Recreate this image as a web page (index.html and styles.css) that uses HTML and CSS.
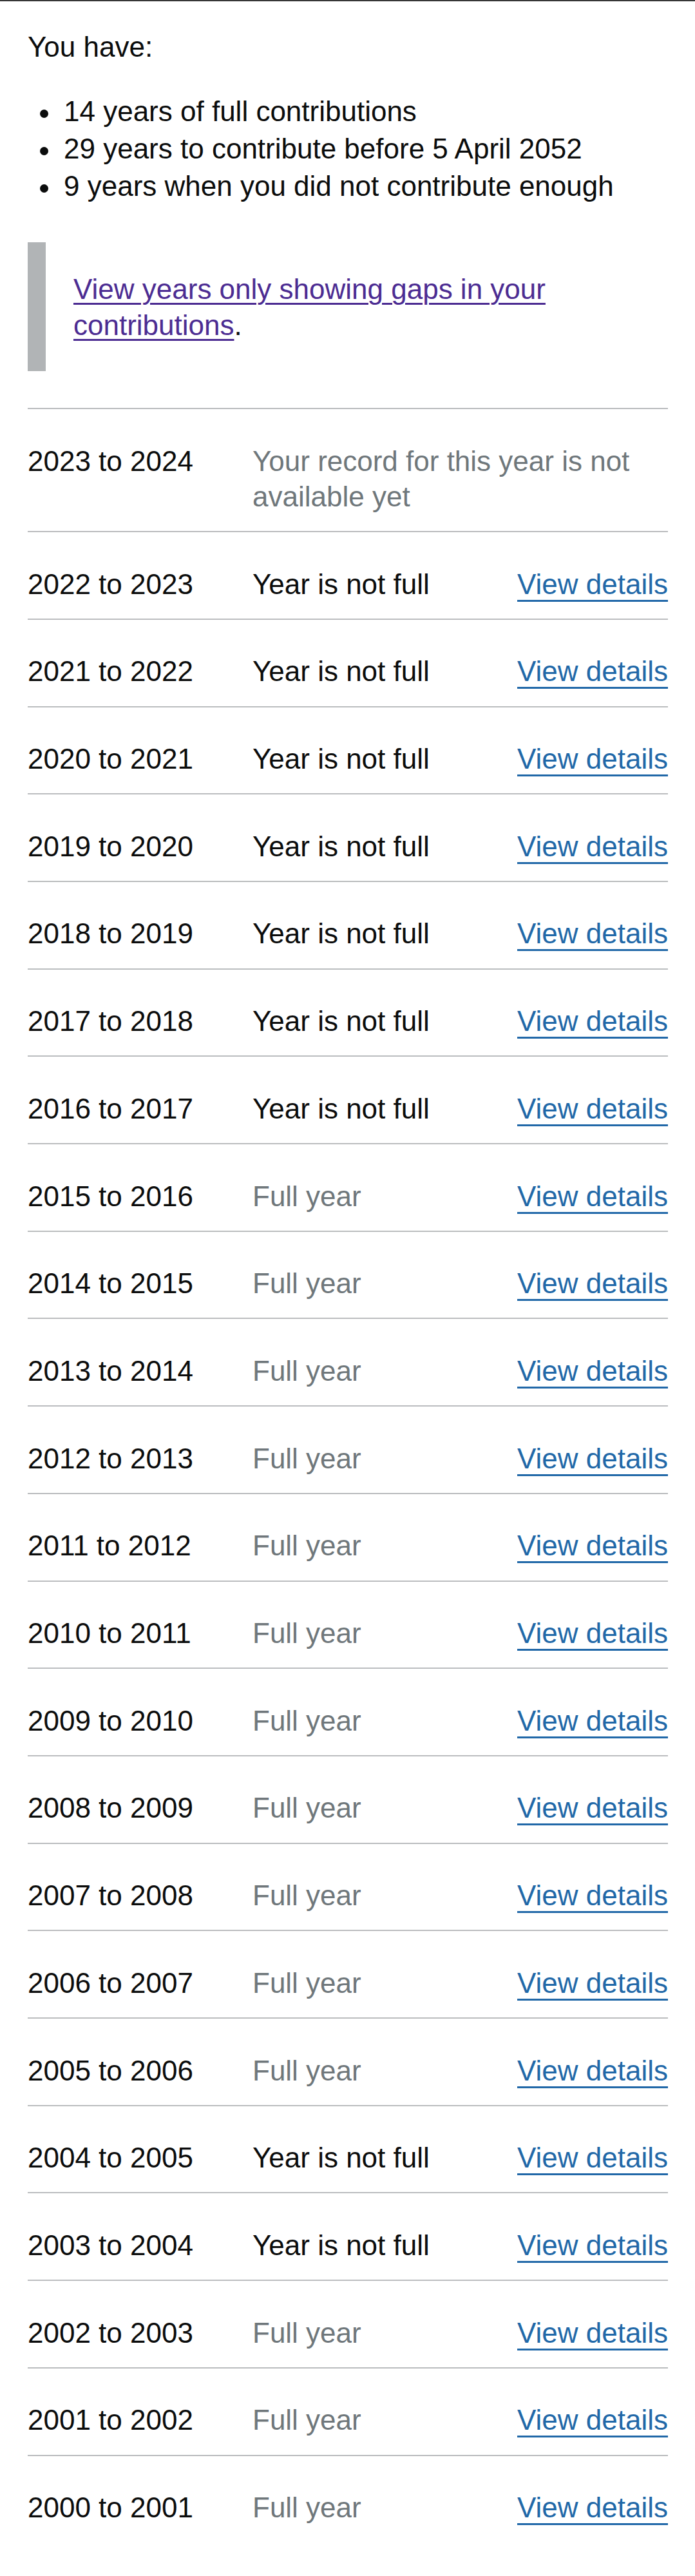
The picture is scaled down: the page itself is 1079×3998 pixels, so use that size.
FILE: index.html
```html
<!DOCTYPE html>
<html lang="en">
<head>
<meta charset="utf-8">
<title>Your National Insurance record</title>
<link rel="stylesheet" href="styles.css">
</head>
<body>
<main class="page">
  <p class="lead">You have:</p>
  <ul class="facts">
    <li>14 years of full contributions</li>
    <li>29 years to contribute before 5 April 2052</li>
    <li>9 years when you did not contribute enough</li>
  </ul>
  <div class="inset">
    <a class="gaps-link" href="#gaps"><span class="gaps-text">View years only showing gaps in your</span> <span class="gaps-text">contributions</span><span class="stop">.</span></a>
  </div>
  <div class="records">
    <div class="row"><div class="key">2023 to 2024</div><div class="value muted">Your record for this year is not available yet</div></div>
    <div class="row"><div class="key">2022 to 2023</div><div class="value">Year is not full</div><div class="action"><a href="#y2022">View details</a></div></div>
    <div class="row"><div class="key">2021 to 2022</div><div class="value">Year is not full</div><div class="action"><a href="#y2021">View details</a></div></div>
    <div class="row"><div class="key">2020 to 2021</div><div class="value">Year is not full</div><div class="action"><a href="#y2020">View details</a></div></div>
    <div class="row"><div class="key">2019 to 2020</div><div class="value">Year is not full</div><div class="action"><a href="#y2019">View details</a></div></div>
    <div class="row"><div class="key">2018 to 2019</div><div class="value">Year is not full</div><div class="action"><a href="#y2018">View details</a></div></div>
    <div class="row"><div class="key">2017 to 2018</div><div class="value">Year is not full</div><div class="action"><a href="#y2017">View details</a></div></div>
    <div class="row"><div class="key">2016 to 2017</div><div class="value">Year is not full</div><div class="action"><a href="#y2016">View details</a></div></div>
    <div class="row"><div class="key">2015 to 2016</div><div class="value muted">Full year</div><div class="action"><a href="#y2015">View details</a></div></div>
    <div class="row"><div class="key">2014 to 2015</div><div class="value muted">Full year</div><div class="action"><a href="#y2014">View details</a></div></div>
    <div class="row"><div class="key">2013 to 2014</div><div class="value muted">Full year</div><div class="action"><a href="#y2013">View details</a></div></div>
    <div class="row"><div class="key">2012 to 2013</div><div class="value muted">Full year</div><div class="action"><a href="#y2012">View details</a></div></div>
    <div class="row"><div class="key">2011 to 2012</div><div class="value muted">Full year</div><div class="action"><a href="#y2011">View details</a></div></div>
    <div class="row"><div class="key">2010 to 2011</div><div class="value muted">Full year</div><div class="action"><a href="#y2010">View details</a></div></div>
    <div class="row"><div class="key">2009 to 2010</div><div class="value muted">Full year</div><div class="action"><a href="#y2009">View details</a></div></div>
    <div class="row"><div class="key">2008 to 2009</div><div class="value muted">Full year</div><div class="action"><a href="#y2008">View details</a></div></div>
    <div class="row"><div class="key">2007 to 2008</div><div class="value muted">Full year</div><div class="action"><a href="#y2007">View details</a></div></div>
    <div class="row"><div class="key">2006 to 2007</div><div class="value muted">Full year</div><div class="action"><a href="#y2006">View details</a></div></div>
    <div class="row"><div class="key">2005 to 2006</div><div class="value muted">Full year</div><div class="action"><a href="#y2005">View details</a></div></div>
    <div class="row"><div class="key">2004 to 2005</div><div class="value">Year is not full</div><div class="action"><a href="#y2004">View details</a></div></div>
    <div class="row"><div class="key">2003 to 2004</div><div class="value">Year is not full</div><div class="action"><a href="#y2003">View details</a></div></div>
    <div class="row"><div class="key">2002 to 2003</div><div class="value muted">Full year</div><div class="action"><a href="#y2002">View details</a></div></div>
    <div class="row"><div class="key">2001 to 2002</div><div class="value muted">Full year</div><div class="action"><a href="#y2001">View details</a></div></div>
    <div class="row"><div class="key">2000 to 2001</div><div class="value muted">Full year</div><div class="action"><a href="#y2000">View details</a></div></div>
  </div>
</main>
</body>
</html>
```
FILE: styles.css
```css
html, body {
  margin: 0;
  padding: 0;
  background: #ffffff;
}

body {
  font-family: "Liberation Sans", Arial, sans-serif;
  color: #0b0c0c;
  font-size: 44px;
}

.page {
  border-top: 2px solid #363636;
  padding: 42px 42px 53px 43px;
}

.lead {
  margin: 0 0 42px;
  line-height: 58px;
}

.facts {
  list-style: none;
  margin: 0 0 58px;
  padding: 0 0 0 56px;
  line-height: 58px;
}

.facts li {
  position: relative;
}

.facts li::before {
  content: "";
  position: absolute;
  left: -37.5px;
  top: 26px;
  width: 13px;
  height: 13px;
  border-radius: 50%;
  background: #0b0c0c;
}

.inset {
  border-left: 28px solid #b1b4b6;
  padding: 45px 20px 43px 43px;
  margin: 0 0 57px;
  line-height: 56px;
}

.gaps-link {
  color: #4c2c92;
  text-decoration: none;
}

.gaps-text {
  text-decoration: underline;
  text-decoration-thickness: 2.6px;
  text-underline-offset: 6px;
}

.stop {
  color: #0b0c0c;
}

.records {
  display: flex;
  flex-direction: column;
}

.row {
  display: flex;
  align-items: flex-start;
  border-top: 2px solid #bbbdbf;
  padding: 52.5px 0 25.8px;
  line-height: 55.4px;
}

.key {
  flex: none;
  width: 349px;
}

.value {
  flex: 1;
}

.muted {
  color: #6f777b;
}

.action {
  flex: none;
  text-align: right;
}

.action a {
  color: #2168a8;
  text-decoration: underline;
  text-decoration-thickness: 3px;
  text-underline-offset: 9px;
}
```
